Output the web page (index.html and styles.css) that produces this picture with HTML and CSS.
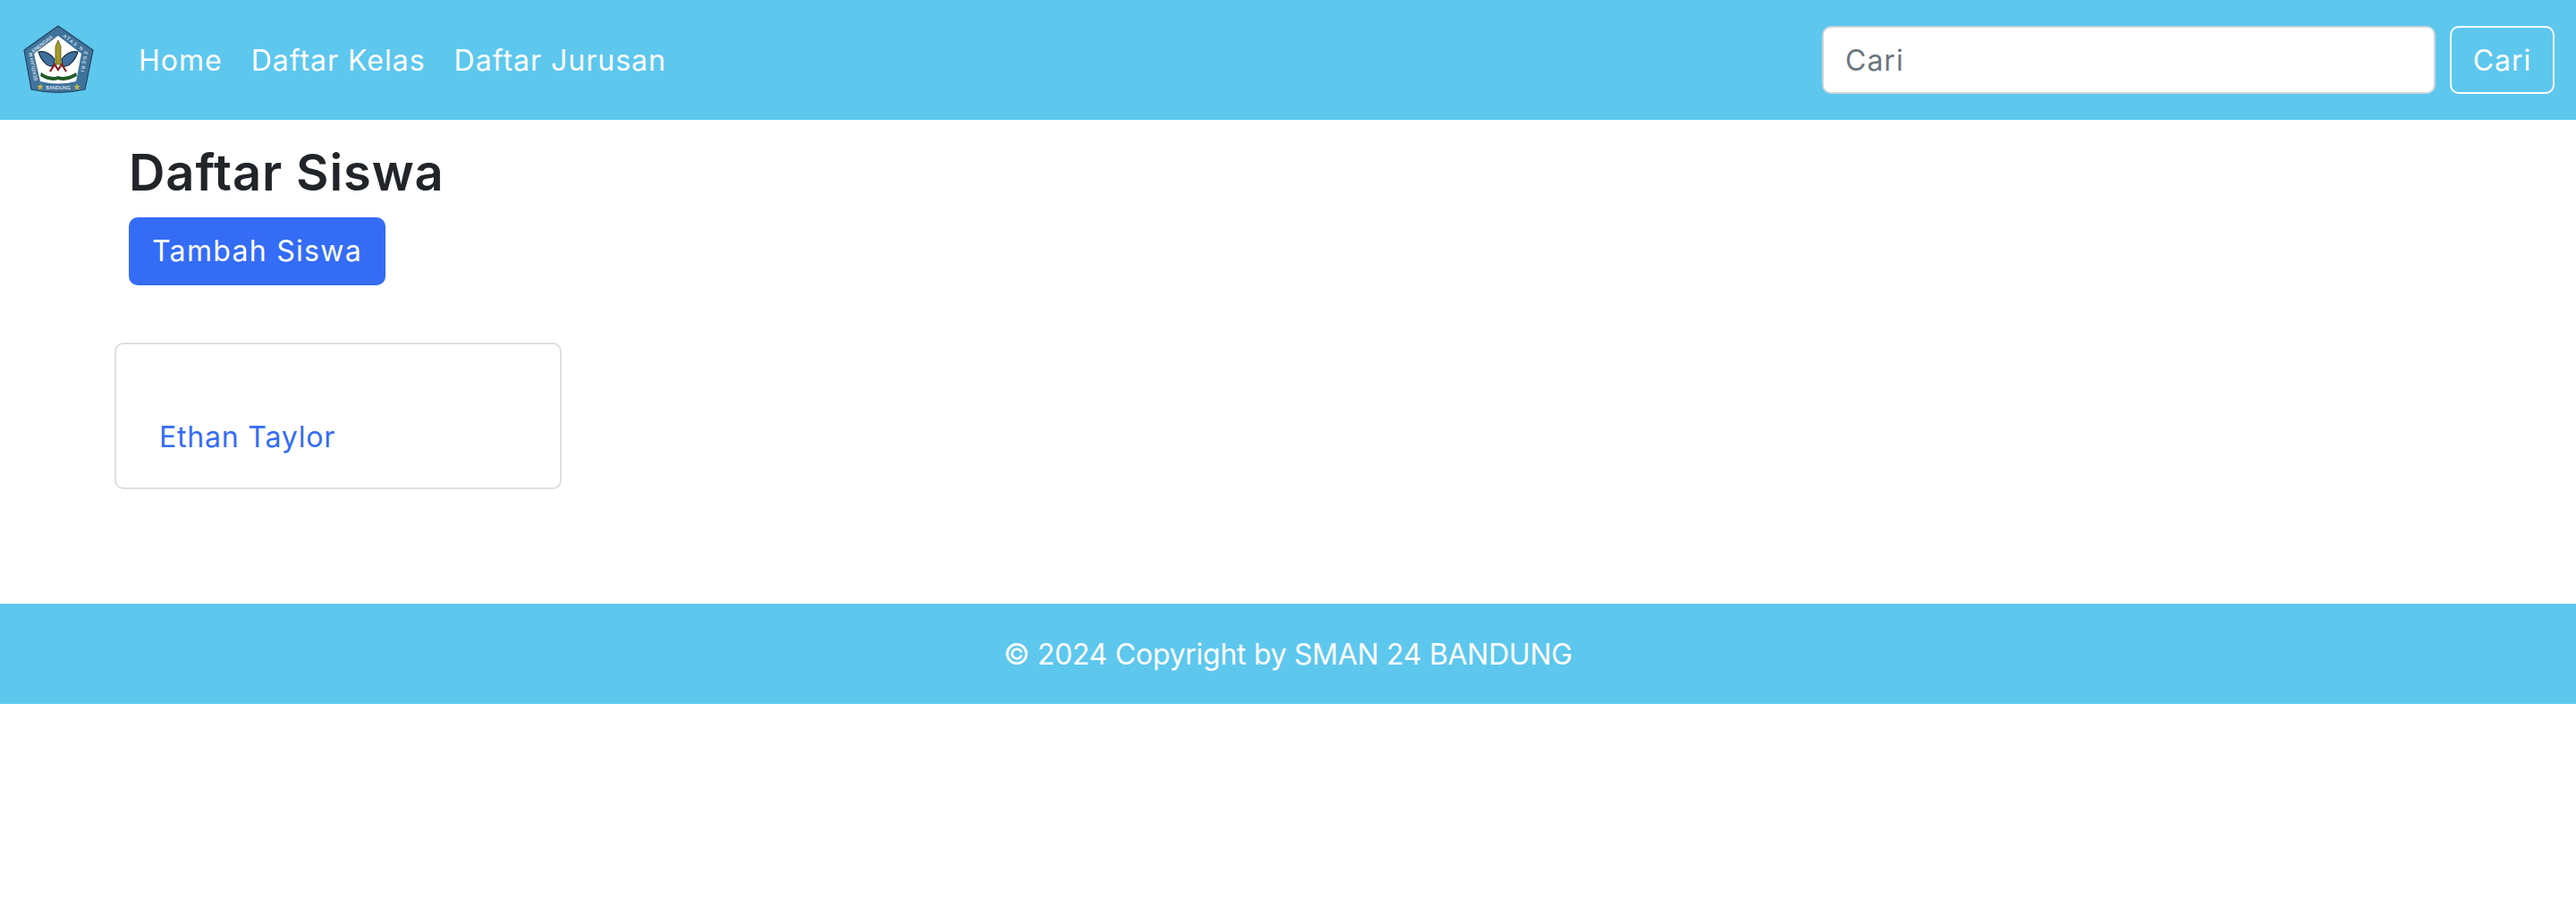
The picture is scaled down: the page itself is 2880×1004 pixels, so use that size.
FILE: index.html
```html
<!DOCTYPE html>
<html lang="id">
<head>
  <meta charset="UTF-8" />
  <title>Daftar Siswa</title>
  <link rel="stylesheet" href="styles.css">
</head>
<body>
  <nav class="navbar">
    <a class="brand" href="#">
      <svg class="logo" viewBox="0 0 80 78" width="80" height="78">
        <path d="M39 1 L78 28 L69 72 Q39 79 9 72 L1 28 Z" fill="#3f739c" stroke="#24435f" stroke-width="1.2"/>
        <path d="M39 12 L65 32 L59 63 Q39 68 19 63 L12 32 Z" fill="#fff"/>
        <defs>
          <path id="logo-arc-left" d="M16 62 L10 32 L39 10"/>
          <path id="logo-arc-right" d="M44 13 L68 31 L62 63"/>
        </defs>
        <text class="logo-text"><textPath href="#logo-arc-left">SEKOLAH MENENGAH</textPath></text>
        <text class="logo-text logo-text-wide"><textPath href="#logo-arc-right">ATAS NEGERI</textPath></text>
        <text class="logo-text" x="39" y="72" text-anchor="middle">BANDUNG</text>
        <path d="M19 65 l1 3 h3 l-2.500 1.800 1 3 -2.500 -1.800 -2.500 1.800 1 -3 -2.500 -1.800 h3 Z M60 65 l1 3 h3 l-2.500 1.800 1 3 -2.500 -1.800 -2.500 1.800 1 -3 -2.500 -1.800 h3 Z" fill="#c9b845"/>
        <path d="M17 30 Q27 28 35 38 L34 46 Q28 47 24 42 Q19 37 17 30 Z M61 30 Q51 28 43 38 L44 46 Q50 47 54 42 Q59 37 61 30 Z" fill="#3f6f9c" stroke="#14283c" stroke-width="1.1"/>
        <path d="M36 44 V24 L39 17 L42 24 V44 Z" fill="#a39a2c" stroke="#5a5518" stroke-width="0.8"/>
        <path d="M30 52 L35 44 L39 50 L43 44 L48 52" fill="none" stroke="#8a1f1f" stroke-width="2.200"/>
        <path d="M20 53 Q30 60 39 57 Q48 60 59 53 L60 57 Q48 64 39 61 Q30 64 19 57 Z" fill="#1f5b24"/>
      </svg>
    </a>
    <div class="nav-links">
      <a href="#">Home</a>
      <a href="#">Daftar Kelas</a>
      <a href="#">Daftar Jurusan</a>
    </div>
    <form class="search">
      <input type="text" placeholder="Cari" />
      <button type="button">Cari</button>
    </form>
  </nav>

  <main class="content">
    <div class="page-head">
      <h3>Daftar Siswa</h3>
      <a class="btn-primary" href="#">Tambah Siswa</a>
    </div>
    <div class="card">
      <a href="#">Ethan Taylor</a>
    </div>
  </main>

  <footer class="footer">© 2024 Copyright by SMAN 24 BANDUNG</footer>
</body>
</html>
```

FILE: styles.css
```css
body {
  margin: 0;
  background: #fff;
  font-family: Inter, "Open Sans", sans-serif;
  font-size: 32px;
  color: #212529;
}
a {
  text-decoration: none;
}
.navbar {
  display: flex;
  align-items: center;
  height: 134px;
  padding: 0 24px 0 26px;
  background: #5dc7ee;
}
.brand {
  display: flex;
  margin-right: 49px;
}
.logo-text {
  font-family: "Liberation Sans", sans-serif;
  font-size: 5.5px;
  fill: #fff;
}
.logo-text-wide {
  letter-spacing: 1.5px;
}
.nav-links {
  display: flex;
  gap: 32px;
}
.nav-links a {
  color: #fff;
  font-size: 32px;
  letter-spacing: 1px;
}
.search {
  display: flex;
  gap: 16px;
  margin-left: auto;
}
.search input {
  width: 686px;
  height: 76px;
  box-sizing: border-box;
  padding: 0 24px;
  border: 2px solid #ced4da;
  border-radius: 10px;
  font-family: inherit;
  font-size: 32px;
  letter-spacing: 1px;
  color: #212529;
}
.search input::placeholder {
  color: #6c757d;
  opacity: 1;
}
.search button {
  width: 117px;
  height: 76px;
  padding: 0;
  border: 2px solid #fff;
  border-radius: 10px;
  background: none;
  color: #fff;
  font-family: inherit;
  font-size: 32px;
  letter-spacing: 1px;
}
.content {
  height: 541px;
  padding: 0 128px;
}
.page-head {
  padding: 26px 16px 0;
}
.page-head h3 {
  margin: 0 0 16px;
  font-size: 56px;
  font-weight: 600;
  line-height: 67px;
  letter-spacing: 0.9px;
}
.btn-primary {
  display: inline-block;
  padding: 16px 26px;
  border-radius: 10px;
  background: #346cf5;
  color: #fff;
  font-size: 32px;
  line-height: 44px;
  letter-spacing: 1.3px;
}
.card {
  display: flex;
  align-items: flex-end;
  box-sizing: border-box;
  width: 500px;
  height: 164px;
  margin-top: 64px;
  padding: 0 48px 34px;
  border: 2px solid #dfdfdf;
  border-radius: 10px;
}
.card a {
  color: #346cf5;
  font-size: 32px;
  line-height: 44px;
  letter-spacing: 0.8px;
}
.footer {
  display: flex;
  justify-content: center;
  align-items: center;
  height: 112px;
  background: #5dc7ee;
  color: #fff;
  font-size: 32px;
  letter-spacing: -0.28px;
}
```
